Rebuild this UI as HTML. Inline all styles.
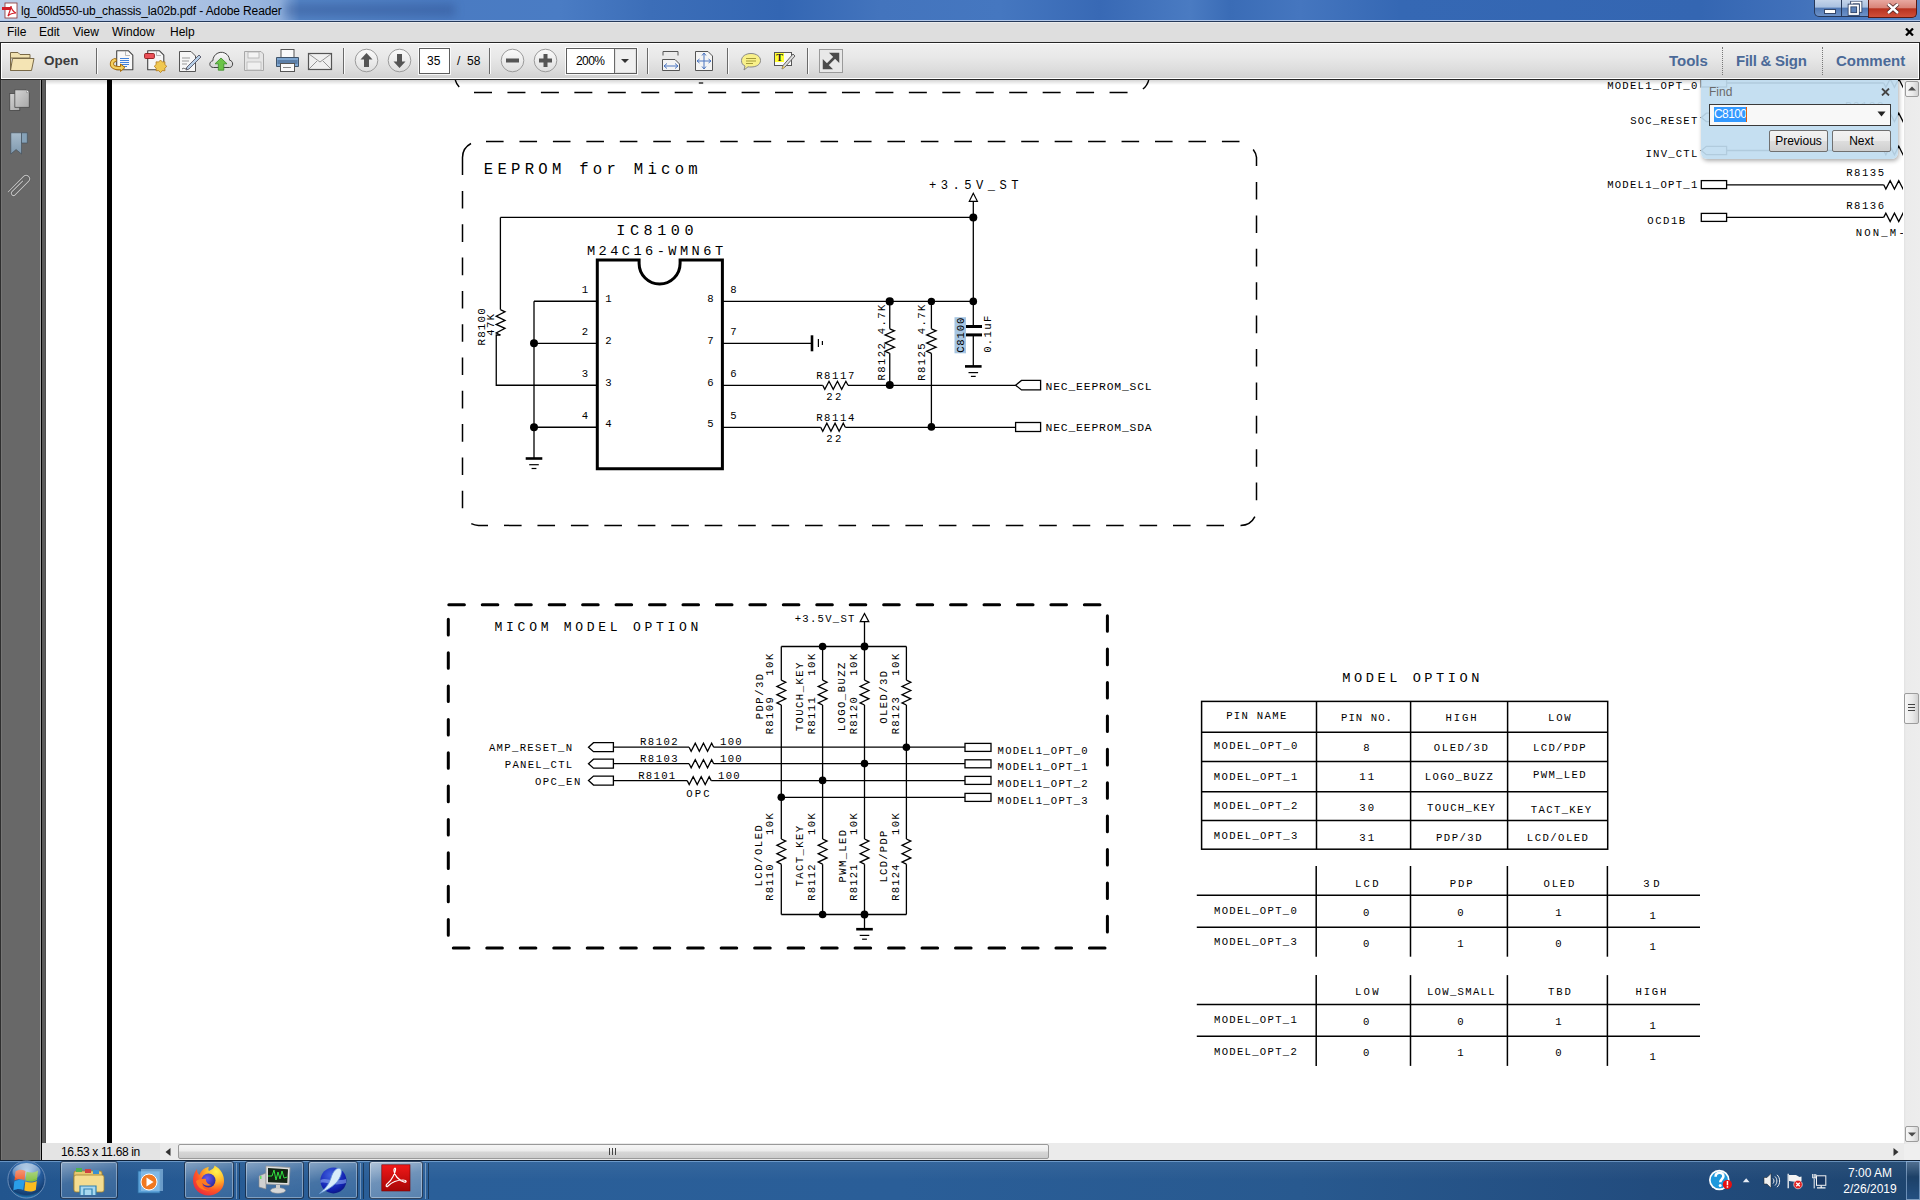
<!DOCTYPE html>
<html><head><meta charset="utf-8"><style>
html,body{margin:0;padding:0;width:1920px;height:1200px;overflow:hidden;background:#fff;}
body{position:relative;font-family:"Liberation Sans",sans-serif;}
.abs{position:absolute;}
#sch text{font-family:"Liberation Mono",monospace;fill:#000;stroke:none;}
</style></head><body>
<div class="abs" style="left:0;top:0;width:1920px;height:20px;background:linear-gradient(90deg,#bccfe8 0px,#b3c8e5 120px,#a4bde2 230px,#8eaedb 280px,#5484c6 300px,#4a7bc2 450px,#4a7cc4 560px,#3c6eb8 650px,#3366b3 780px,#4374bd 880px,#4577c0 1000px,#3869b5 1100px,#4a7bc2 1190px,#3a6cb6 1230px,#4576bf 1300px,#3568b4 1400px,#3466b2 1700px,#4070ba 1790px,#5585c6 1920px);"></div><div class="abs" style="left:285px;top:4px;width:170px;height:12px;background:rgba(40,70,130,0.35);filter:blur(4px);"></div><div class="abs" style="left:0;top:20px;width:1920px;height:1px;background:#b0c6e8;"></div><div class="abs" style="left:0;top:21px;width:1920px;height:1px;background:#263a5a;"></div><svg class="abs" style="left:2px;top:2px" width="16" height="17" viewBox="0 0 16 17"><rect x="3" y="1" width="12" height="15" fill="#fff" stroke="#8a3030" stroke-width="0.8"/><rect x="0" y="5" width="9" height="3" fill="#d2202a"/><path d="M6,14 C8,9 9,5 9,4 C9,6 11,10 14,11 C11,11 8,12 6,14Z" fill="none" stroke="#d2202a" stroke-width="1.2"/></svg><div class="abs" style="left:21px;top:3px;font-size:12px;line-height:16px;color:#000;white-space:nowrap;letter-spacing:-0.12px;">lg_60ld550-ub_chassis_la02b.pdf - Adobe Reader</div><div class="abs" style="left:1814px;top:0;width:28px;height:17px;border:1px solid #26385a;border-top:none;border-radius:0 0 0 5px;background:linear-gradient(180deg,#c4d4ea 0,#a9c0e0 45%,#5078b4 50%,#6d92c8 100%);box-sizing:border-box;"></div><div class="abs" style="left:1841px;top:0;width:28px;height:17px;border:1px solid #26385a;border-top:none;background:linear-gradient(180deg,#c4d4ea 0,#a9c0e0 45%,#5078b4 50%,#6d92c8 100%);box-sizing:border-box;"></div><div class="abs" style="left:1868px;top:0;width:49px;height:18px;border:1px solid #5a1a14;border-top:none;border-radius:0 0 5px 0;background:linear-gradient(180deg,#e8a8a0 0,#d98478 45%,#b8321f 52%,#d0503a 100%);box-sizing:border-box;"></div><div class="abs" style="left:1824px;top:9px;width:10px;height:3px;background:#fff;border:1px solid #33466a;"></div><svg class="abs" style="left:1847px;top:1px" width="16" height="15" viewBox="0 0 16 15"><rect x="5" y="1.5" width="8.5" height="8.5" fill="none" stroke="#33466a" stroke-width="3.6"/><rect x="5" y="1.5" width="8.5" height="8.5" fill="none" stroke="#fff" stroke-width="1.8"/><rect x="2.5" y="4.5" width="8.5" height="8.5" fill="#5a80b8" stroke="#33466a" stroke-width="3.6"/><rect x="2.5" y="4.5" width="8.5" height="8.5" fill="none" stroke="#fff" stroke-width="1.8"/></svg><svg class="abs" style="left:1886px;top:3px" width="14" height="11" viewBox="0 0 14 11"><path d="M2,1 L12,10 M12,1 L2,10" stroke="#4a2020" stroke-width="4"/><path d="M2,1 L12,10 M12,1 L2,10" stroke="#fff" stroke-width="2.4"/></svg><div class="abs" style="left:0;top:22px;width:1920px;height:20px;background:#dedede;"></div><div class="abs" style="left:0;top:22px;width:1920px;height:1px;background:#ececec;"></div><div class="abs" style="left:7px;top:24px;font-size:12px;line-height:16px;color:#000;">File</div><div class="abs" style="left:39px;top:24px;font-size:12px;line-height:16px;color:#000;">Edit</div><div class="abs" style="left:73px;top:24px;font-size:12px;line-height:16px;color:#000;">View</div><div class="abs" style="left:112px;top:24px;font-size:12px;line-height:16px;color:#000;">Window</div><div class="abs" style="left:170px;top:24px;font-size:12px;line-height:16px;color:#000;">Help</div><svg class="abs" style="left:1905px;top:28px" width="9" height="8" viewBox="0 0 9 8"><path d="M1,0.5 L8,7.5 M8,0.5 L1,7.5" stroke="#000" stroke-width="2.2"/></svg><div class="abs" style="left:0;top:80px;width:41px;height:1080px;background:#686868;"></div><div class="abs" style="left:0;top:80px;width:1px;height:1080px;background:#2e2e2e;"></div><div class="abs" style="left:1px;top:80px;width:1px;height:1080px;background:#747474;"></div><div class="abs" style="left:40px;top:80px;width:1px;height:1080px;background:#a5a5a5;"></div><div class="abs" style="left:41px;top:80px;width:1px;height:1080px;background:#000;"></div><div class="abs" style="left:42px;top:80px;width:3px;height:1063px;background:#5a5a5a;"></div><div class="abs" style="left:45px;top:80px;width:1px;height:1063px;background:#4d4d4d;"></div><svg id="sch" class="abs" style="left:0;top:0" width="1920" height="1200" viewBox="0 0 1920 1200" stroke="#000" fill="none"><defs><clipPath id="pc"><rect x="46" y="80" width="1857" height="1063"/></clipPath></defs><g clip-path="url(#pc)"><rect x="46" y="80" width="1858" height="1063" fill="#fff" stroke="none"/><rect x="107" y="80" width="5" height="1063" fill="#000" stroke="none"/><line x1="474.00" y1="92.40" x2="1129.00" y2="92.40" stroke-width="1.50" stroke-dasharray="18.00 15.45" stroke-dashoffset="0.00" stroke-linecap="butt"/><path d="M455.3,80 A16,16 0 0 0 459.2,87" fill="none" stroke-width="1.4"/><path d="M1148.7,80 A16,16 0 0 1 1142.9,89" fill="none" stroke-width="1.4"/><line x1="698.80" y1="83.00" x2="703.20" y2="83.00" stroke-width="1.20"/><line x1="486.00" y1="141.40" x2="1241.00" y2="141.40" stroke-width="1.50" stroke-dasharray="17.60 15.85" stroke-dashoffset="0.00" stroke-linecap="butt"/><line x1="1256.50" y1="182.00" x2="1256.50" y2="501.00" stroke-width="1.50" stroke-dasharray="17.60 15.80" stroke-dashoffset="0.00" stroke-linecap="butt"/><line x1="504.00" y1="525.40" x2="1224.50" y2="525.40" stroke-width="1.50" stroke-dasharray="17.60 15.85" stroke-dashoffset="0.00" stroke-linecap="butt"/><line x1="462.50" y1="191.00" x2="462.50" y2="509.50" stroke-width="1.50" stroke-dasharray="17.60 15.70" stroke-dashoffset="0.00" stroke-linecap="butt"/><path d="M471,143.5 A16,16 0 0 0 462.5,157.4 L462.5,175" fill="none" stroke-width="1.5"/><path d="M1253.2,149.5 A16,16 0 0 1 1256.5,157.4 L1256.5,166" fill="none" stroke-width="1.5"/><path d="M1254.9,516.6 A16,16 0 0 1 1240.5,525.4" fill="none" stroke-width="1.5"/><path d="M471.3,523.7 A16,16 0 0 0 478.5,525.4 L488,525.4" fill="none" stroke-width="1.5"/><text x="483.75" y="174.00" font-size="15.63" letter-spacing="4.26">EEPROM for Micom</text><text x="929.03" y="189.30" font-size="12.14" letter-spacing="4.46">+3.5V_ST</text><polygon points="973.3,193.3 969.3,201.3 977.4,201.3" fill="#fff" stroke-width="1.2"/><line x1="973.30" y1="201.30" x2="973.30" y2="326.50" stroke-width="1.30"/><line x1="973.30" y1="334.90" x2="973.30" y2="366.40" stroke-width="1.30"/><circle cx="973.30" cy="217.40" r="4.00" fill="#000" stroke="none"/><line x1="500.40" y1="217.40" x2="973.30" y2="217.40" stroke-width="1.30"/><line x1="500.40" y1="217.40" x2="500.40" y2="309.60" stroke-width="1.30"/><polyline fill="none" stroke-width="1.30" points="500.40,309.60 505.00,311.80 496.20,316.20 505.00,320.40 496.20,324.40 505.00,328.40 496.20,333.00 500.40,335.00"/><polyline fill="none" stroke-width="1.30" points="500.40,335.00 496.25,335.00 496.25,385.25 596.00,385.25"/><text x="0" y="0" transform="translate(485.00 345.47) rotate(-90)" font-size="10.93" letter-spacing="1.10">R8100</text><text x="0" y="0" transform="translate(494.00 335.83) rotate(-90)" font-size="10.32" letter-spacing="1.58">47K</text><line x1="534.00" y1="301.25" x2="596.00" y2="301.25" stroke-width="1.30"/><line x1="534.00" y1="301.25" x2="534.00" y2="458.50" stroke-width="1.30"/><circle cx="534.00" cy="343.30" r="4.00" fill="#000" stroke="none"/><circle cx="534.00" cy="427.25" r="4.00" fill="#000" stroke="none"/><line x1="534.00" y1="343.30" x2="596.00" y2="343.30" stroke-width="1.30"/><line x1="534.00" y1="427.25" x2="596.00" y2="427.25" stroke-width="1.30"/><line x1="525.70" y1="458.50" x2="542.30" y2="458.50" stroke-width="2.60"/><line x1="529.20" y1="464.70" x2="538.80" y2="464.70" stroke-width="1.20"/><line x1="531.60" y1="468.50" x2="536.40" y2="468.50" stroke-width="1.20"/><path d="M597.3,259.9 L639.1,259.9 L639.1,263.5 A20.5,20.5 0 0 0 680.1,263.5 L680.1,259.9 L722.4,259.9 L722.4,468.75 L597.3,468.75 Z" fill="none" stroke-width="3" stroke-linejoin="miter"/><text x="616.29" y="235.00" font-size="15.17" letter-spacing="4.54">IC8100</text><text x="586.91" y="255.00" font-size="13.66" letter-spacing="3.44">M24C16-WMN6T</text><text x="581.65" y="293.00" font-size="10.62" letter-spacing="0.00">1</text><text x="605.15" y="301.70" font-size="10.62" letter-spacing="0.00">1</text><text x="707.15" y="301.70" font-size="10.62" letter-spacing="0.00">8</text><text x="730.15" y="293.00" font-size="10.62" letter-spacing="0.00">8</text><text x="581.65" y="334.90" font-size="10.62" letter-spacing="0.00">2</text><text x="605.15" y="343.60" font-size="10.62" letter-spacing="0.00">2</text><text x="707.15" y="343.60" font-size="10.62" letter-spacing="0.00">7</text><text x="730.15" y="334.90" font-size="10.62" letter-spacing="0.00">7</text><text x="581.65" y="376.80" font-size="10.62" letter-spacing="0.00">3</text><text x="605.15" y="385.50" font-size="10.62" letter-spacing="0.00">3</text><text x="707.15" y="385.50" font-size="10.62" letter-spacing="0.00">6</text><text x="730.15" y="376.80" font-size="10.62" letter-spacing="0.00">6</text><text x="581.65" y="418.70" font-size="10.62" letter-spacing="0.00">4</text><text x="605.15" y="427.40" font-size="10.62" letter-spacing="0.00">4</text><text x="707.15" y="427.40" font-size="10.62" letter-spacing="0.00">5</text><text x="730.15" y="418.70" font-size="10.62" letter-spacing="0.00">5</text><line x1="722.40" y1="301.30" x2="973.30" y2="301.30" stroke-width="1.30"/><line x1="722.40" y1="343.30" x2="812.00" y2="343.30" stroke-width="1.30"/><line x1="812.00" y1="335.30" x2="812.00" y2="351.30" stroke-width="2.60"/><line x1="818.40" y1="339.00" x2="818.40" y2="347.00" stroke-width="1.20"/><line x1="822.40" y1="341.00" x2="822.40" y2="345.00" stroke-width="1.20"/><line x1="722.40" y1="385.30" x2="822.70" y2="385.30" stroke-width="1.30"/><polyline fill="none" stroke-width="1.30" points="822.70,385.30 824.81,389.30 829.03,381.30 833.24,389.30 837.46,381.30 841.67,389.30 845.89,381.30 848.00,385.30"/><line x1="848.00" y1="385.30" x2="1015.60" y2="385.30" stroke-width="1.30"/><text x="816.15" y="379.00" font-size="10.62" letter-spacing="1.60">R8117</text><text x="826.15" y="399.60" font-size="10.62" letter-spacing="2.53">22</text><line x1="722.40" y1="427.30" x2="820.70" y2="427.30" stroke-width="1.30"/><polyline fill="none" stroke-width="1.30" points="820.70,427.30 822.75,431.30 826.85,423.30 830.95,431.30 835.05,423.30 839.15,431.30 843.25,423.30 845.30,427.30"/><line x1="845.30" y1="427.30" x2="1015.60" y2="427.30" stroke-width="1.30"/><text x="816.15" y="421.00" font-size="10.62" letter-spacing="1.60">R8114</text><text x="826.15" y="441.70" font-size="10.62" letter-spacing="2.53">22</text><circle cx="889.75" cy="301.40" r="4.10" fill="#000" stroke="none"/><line x1="889.75" y1="301.40" x2="889.75" y2="328.80" stroke-width="1.30"/><polyline fill="none" stroke-width="1.30" points="889.75,328.80 894.45,330.84 885.05,334.93 894.45,339.01 885.05,343.09 894.45,347.18 885.05,351.26 889.75,353.30"/><line x1="889.75" y1="353.30" x2="889.75" y2="385.10" stroke-width="1.30"/><circle cx="889.75" cy="385.10" r="4.00" fill="#000" stroke="none"/><circle cx="931.40" cy="301.40" r="3.70" fill="#000" stroke="none"/><line x1="931.40" y1="301.40" x2="931.40" y2="328.80" stroke-width="1.30"/><polyline fill="none" stroke-width="1.30" points="931.40,328.80 936.10,330.84 926.70,334.93 936.10,339.01 926.70,343.09 936.10,347.18 926.70,351.26 931.40,353.30"/><line x1="931.40" y1="353.30" x2="931.40" y2="426.90" stroke-width="1.30"/><circle cx="931.40" cy="426.90" r="3.80" fill="#000" stroke="none"/><circle cx="973.30" cy="301.40" r="3.80" fill="#000" stroke="none"/><line x1="965.60" y1="326.50" x2="982.00" y2="326.50" stroke-width="3.00"/><line x1="965.60" y1="334.90" x2="982.00" y2="334.90" stroke-width="3.00"/><line x1="965.00" y1="366.40" x2="981.60" y2="366.40" stroke-width="2.60"/><line x1="968.50" y1="372.60" x2="978.10" y2="372.60" stroke-width="1.20"/><line x1="970.90" y1="376.40" x2="975.70" y2="376.40" stroke-width="1.20"/><rect x="954.5" y="317.2" width="11.5" height="36.1" fill="#a6c5e2" stroke="none"/><text x="0" y="0" transform="translate(964.00 352.85) rotate(-90)" font-size="10.62" letter-spacing="0.85">C8100</text><text x="0" y="0" transform="translate(990.70 352.85) rotate(-90)" font-size="10.62" letter-spacing="1.35">0.1uF</text><text x="0" y="0" transform="translate(884.50 380.45) rotate(-90)" font-size="10.62" letter-spacing="1.35">R8122 4.7K</text><text x="0" y="0" transform="translate(925.30 380.85) rotate(-90)" font-size="10.62" letter-spacing="1.39">R8125 4.7K</text><polygon points="1015.6,385.2 1021.5,380.4 1040.6,380.4 1040.6,389.9 1021.5,389.9" fill="#fff" stroke-width="1.3"/><rect x="1015.6" y="422.5" width="25" height="9" fill="#fff" stroke-width="1.3"/><text x="1045.59" y="390.40" font-size="11.38" letter-spacing="0.81">NEC_EEPROM_SCL</text><text x="1045.59" y="431.00" font-size="11.38" letter-spacing="0.81">NEC_EEPROM_SDA</text><line x1="448.80" y1="604.70" x2="1107.00" y2="604.70" stroke-width="3.00" stroke-dasharray="15.60 17.85" stroke-dashoffset="0.00" stroke-linecap="round"/><line x1="448.30" y1="619.30" x2="448.30" y2="948.00" stroke-width="3.00" stroke-dasharray="15.60 17.76" stroke-dashoffset="0.00" stroke-linecap="round"/><line x1="453.30" y1="948.00" x2="1107.40" y2="948.00" stroke-width="3.00" stroke-dasharray="15.60 17.88" stroke-dashoffset="0.00" stroke-linecap="round"/><line x1="1107.40" y1="615.70" x2="1107.40" y2="948.00" stroke-width="3.00" stroke-dasharray="15.60 17.80" stroke-dashoffset="0.00" stroke-linecap="round"/><text x="494.56" y="630.80" font-size="13.05" letter-spacing="3.70">MICOM MODEL OPTION</text><text x="488.95" y="751.00" font-size="10.62" letter-spacing="1.32">AMP_RESET_N</text><text x="504.85" y="767.80" font-size="10.62" letter-spacing="1.25">PANEL_CTL</text><text x="534.95" y="784.90" font-size="10.62" letter-spacing="1.43">OPC_EN</text><polygon points="588.5,747.20 593.5,742.70 613.4,742.70 613.4,751.70 593.5,751.70" fill="#fff" stroke-width="1.3"/><polygon points="588.5,763.70 593.5,759.20 613.4,759.20 613.4,768.20 593.5,768.20" fill="#fff" stroke-width="1.3"/><polygon points="588.5,780.60 593.5,776.10 613.4,776.10 613.4,785.10 593.5,785.10" fill="#fff" stroke-width="1.3"/><line x1="613.40" y1="747.20" x2="689.10" y2="747.20" stroke-width="1.30"/><polyline fill="none" stroke-width="1.30" points="689.10,747.20 691.15,751.20 695.25,743.20 699.35,751.20 703.45,743.20 707.55,751.20 711.65,743.20 713.70,747.20"/><line x1="713.70" y1="747.20" x2="965.00" y2="747.20" stroke-width="1.30"/><line x1="613.40" y1="763.70" x2="689.10" y2="763.70" stroke-width="1.30"/><polyline fill="none" stroke-width="1.30" points="689.10,763.70 691.15,767.70 695.25,759.70 699.35,767.70 703.45,759.70 707.55,767.70 711.65,759.70 713.70,763.70"/><line x1="713.70" y1="763.70" x2="965.00" y2="763.70" stroke-width="1.30"/><line x1="613.40" y1="780.60" x2="687.20" y2="780.60" stroke-width="1.30"/><polyline fill="none" stroke-width="1.30" points="687.20,780.60 689.20,784.60 693.20,776.60 697.20,784.60 701.20,776.60 705.20,784.60 709.20,776.60 711.20,780.60"/><line x1="711.20" y1="780.60" x2="965.00" y2="780.60" stroke-width="1.30"/><line x1="781.30" y1="797.30" x2="965.00" y2="797.30" stroke-width="1.30"/><text x="639.95" y="744.90" font-size="10.62" letter-spacing="1.48">R8102</text><text x="719.95" y="744.90" font-size="10.62" letter-spacing="1.33">100</text><text x="639.95" y="761.50" font-size="10.62" letter-spacing="1.48">R8103</text><text x="719.95" y="761.50" font-size="10.62" letter-spacing="1.33">100</text><text x="638.15" y="778.80" font-size="10.62" letter-spacing="1.30">R8101</text><text x="717.95" y="778.80" font-size="10.62" letter-spacing="1.33">100</text><text x="686.35" y="797.00" font-size="10.62" letter-spacing="2.13">OPC</text><text x="794.65" y="622.20" font-size="10.62" letter-spacing="1.26">+3.5V_ST</text><polygon points="864.5,613.5 860.2,621.7 868.8,621.7" fill="#fff" stroke-width="1.2"/><line x1="864.50" y1="621.70" x2="864.50" y2="646.50" stroke-width="1.30"/><line x1="781.30" y1="646.50" x2="906.40" y2="646.50" stroke-width="1.30"/><line x1="781.30" y1="914.50" x2="906.40" y2="914.50" stroke-width="1.30"/><line x1="781.30" y1="646.50" x2="781.30" y2="680.20" stroke-width="1.30"/><polyline fill="none" stroke-width="1.30" points="781.30,680.20 785.70,682.27 776.90,686.40 785.70,690.53 776.90,694.67 785.70,698.80 776.90,702.93 781.30,705.00"/><line x1="781.30" y1="705.00" x2="781.30" y2="839.00" stroke-width="1.30"/><polyline fill="none" stroke-width="1.30" points="781.30,839.00 785.70,841.10 776.90,845.30 785.70,849.50 776.90,853.70 785.70,857.90 776.90,862.10 781.30,864.20"/><line x1="781.30" y1="864.20" x2="781.30" y2="914.50" stroke-width="1.30"/><line x1="822.60" y1="646.50" x2="822.60" y2="680.20" stroke-width="1.30"/><polyline fill="none" stroke-width="1.30" points="822.60,680.20 827.00,682.27 818.20,686.40 827.00,690.53 818.20,694.67 827.00,698.80 818.20,702.93 822.60,705.00"/><line x1="822.60" y1="705.00" x2="822.60" y2="839.00" stroke-width="1.30"/><polyline fill="none" stroke-width="1.30" points="822.60,839.00 827.00,841.10 818.20,845.30 827.00,849.50 818.20,853.70 827.00,857.90 818.20,862.10 822.60,864.20"/><line x1="822.60" y1="864.20" x2="822.60" y2="914.50" stroke-width="1.30"/><line x1="864.50" y1="646.50" x2="864.50" y2="680.20" stroke-width="1.30"/><polyline fill="none" stroke-width="1.30" points="864.50,680.20 868.90,682.27 860.10,686.40 868.90,690.53 860.10,694.67 868.90,698.80 860.10,702.93 864.50,705.00"/><line x1="864.50" y1="705.00" x2="864.50" y2="839.00" stroke-width="1.30"/><polyline fill="none" stroke-width="1.30" points="864.50,839.00 868.90,841.10 860.10,845.30 868.90,849.50 860.10,853.70 868.90,857.90 860.10,862.10 864.50,864.20"/><line x1="864.50" y1="864.20" x2="864.50" y2="914.50" stroke-width="1.30"/><line x1="906.40" y1="646.50" x2="906.40" y2="680.20" stroke-width="1.30"/><polyline fill="none" stroke-width="1.30" points="906.40,680.20 910.80,682.27 902.00,686.40 910.80,690.53 902.00,694.67 910.80,698.80 902.00,702.93 906.40,705.00"/><line x1="906.40" y1="705.00" x2="906.40" y2="839.00" stroke-width="1.30"/><polyline fill="none" stroke-width="1.30" points="906.40,839.00 910.80,841.10 902.00,845.30 910.80,849.50 902.00,853.70 910.80,857.90 902.00,862.10 906.40,864.20"/><line x1="906.40" y1="864.20" x2="906.40" y2="914.50" stroke-width="1.30"/><circle cx="822.60" cy="646.50" r="3.80" fill="#000" stroke="none"/><circle cx="864.50" cy="646.50" r="3.90" fill="#000" stroke="none"/><circle cx="906.40" cy="747.20" r="3.80" fill="#000" stroke="none"/><circle cx="864.50" cy="763.60" r="3.80" fill="#000" stroke="none"/><circle cx="822.60" cy="780.40" r="3.80" fill="#000" stroke="none"/><circle cx="781.30" cy="797.30" r="3.80" fill="#000" stroke="none"/><circle cx="822.60" cy="914.50" r="3.80" fill="#000" stroke="none"/><circle cx="864.50" cy="914.50" r="3.90" fill="#000" stroke="none"/><line x1="864.50" y1="914.50" x2="864.50" y2="929.20" stroke-width="1.30"/><line x1="856.20" y1="929.20" x2="872.80" y2="929.20" stroke-width="2.60"/><line x1="859.70" y1="935.40" x2="869.30" y2="935.40" stroke-width="1.20"/><line x1="862.10" y1="939.20" x2="866.90" y2="939.20" stroke-width="1.20"/><text x="0" y="0" transform="translate(762.50 719.35) rotate(-90)" font-size="10.62" letter-spacing="1.47">PDP/3D</text><text x="0" y="0" transform="translate(772.50 734.35) rotate(-90)" font-size="10.62" letter-spacing="1.35">R8109</text><text x="0" y="0" transform="translate(772.50 675.85) rotate(-90)" font-size="10.62" letter-spacing="1.58">10K</text><text x="0" y="0" transform="translate(803.00 731.35) rotate(-90)" font-size="10.62" letter-spacing="1.43">TOUCH_KEY</text><text x="0" y="0" transform="translate(814.50 734.35) rotate(-90)" font-size="10.62" letter-spacing="1.35">R8111</text><text x="0" y="0" transform="translate(814.50 675.85) rotate(-90)" font-size="10.62" letter-spacing="1.58">10K</text><text x="0" y="0" transform="translate(845.20 731.35) rotate(-90)" font-size="10.62" letter-spacing="1.43">LOGO_BUZZ</text><text x="0" y="0" transform="translate(856.50 734.35) rotate(-90)" font-size="10.62" letter-spacing="1.35">R8120</text><text x="0" y="0" transform="translate(856.50 675.85) rotate(-90)" font-size="10.62" letter-spacing="1.58">10K</text><text x="0" y="0" transform="translate(887.20 723.85) rotate(-90)" font-size="10.62" letter-spacing="1.41">OLED/3D</text><text x="0" y="0" transform="translate(898.50 734.35) rotate(-90)" font-size="10.62" letter-spacing="1.35">R8123</text><text x="0" y="0" transform="translate(898.50 675.85) rotate(-90)" font-size="10.62" letter-spacing="1.58">10K</text><text x="0" y="0" transform="translate(762.20 886.55) rotate(-90)" font-size="10.62" letter-spacing="1.50">LCD/OLED</text><text x="0" y="0" transform="translate(773.30 900.85) rotate(-90)" font-size="10.62" letter-spacing="1.15">R8110</text><text x="0" y="0" transform="translate(773.30 835.05) rotate(-90)" font-size="10.62" letter-spacing="1.38">10K</text><text x="0" y="0" transform="translate(803.40 886.55) rotate(-90)" font-size="10.62" letter-spacing="1.38">TACT_KEY</text><text x="0" y="0" transform="translate(814.60 900.85) rotate(-90)" font-size="10.62" letter-spacing="1.15">R8112</text><text x="0" y="0" transform="translate(814.60 835.05) rotate(-90)" font-size="10.62" letter-spacing="1.38">10K</text><text x="0" y="0" transform="translate(845.50 882.55) rotate(-90)" font-size="10.62" letter-spacing="1.36">PWM_LED</text><text x="0" y="0" transform="translate(856.60 900.85) rotate(-90)" font-size="10.62" letter-spacing="1.15">R8121</text><text x="0" y="0" transform="translate(856.60 835.05) rotate(-90)" font-size="10.62" letter-spacing="1.38">10K</text><text x="0" y="0" transform="translate(887.30 882.55) rotate(-90)" font-size="10.62" letter-spacing="1.23">LCD/PDP</text><text x="0" y="0" transform="translate(898.50 900.85) rotate(-90)" font-size="10.62" letter-spacing="1.15">R8124</text><text x="0" y="0" transform="translate(898.50 835.05) rotate(-90)" font-size="10.62" letter-spacing="1.38">10K</text><rect x="965" y="743.40" width="26" height="8" fill="#fff" stroke-width="1.3"/><text x="997.55" y="754.00" font-size="10.62" letter-spacing="1.25">MODEL1_OPT_0</text><rect x="965" y="759.80" width="26" height="8" fill="#fff" stroke-width="1.3"/><text x="997.55" y="770.00" font-size="10.62" letter-spacing="1.25">MODEL1_OPT_1</text><rect x="965" y="776.40" width="26" height="8" fill="#fff" stroke-width="1.3"/><text x="997.55" y="787.00" font-size="10.62" letter-spacing="1.25">MODEL1_OPT_2</text><rect x="965" y="793.40" width="26" height="8" fill="#fff" stroke-width="1.3"/><text x="997.55" y="804.00" font-size="10.62" letter-spacing="1.25">MODEL1_OPT_3</text><text x="1342.31" y="682.40" font-size="13.66" letter-spacing="3.53">MODEL OPTION</text><rect x="1201.6" y="701.4" width="406.1" height="147.8" fill="none" stroke-width="1.5"/><line x1="1316.50" y1="701.40" x2="1316.50" y2="849.20" stroke-width="1.50"/><line x1="1410.60" y1="701.40" x2="1410.60" y2="849.20" stroke-width="1.50"/><line x1="1507.60" y1="701.40" x2="1507.60" y2="849.20" stroke-width="1.50"/><line x1="1201.60" y1="732.30" x2="1607.70" y2="732.30" stroke-width="1.50"/><line x1="1201.60" y1="761.50" x2="1607.70" y2="761.50" stroke-width="1.50"/><line x1="1201.60" y1="791.70" x2="1607.70" y2="791.70" stroke-width="1.50"/><line x1="1201.60" y1="820.60" x2="1607.70" y2="820.60" stroke-width="1.50"/><text x="1226.15" y="719.40" font-size="10.62" letter-spacing="1.31">PIN NAME</text><text x="1340.95" y="721.10" font-size="10.62" letter-spacing="1.08">PIN NO.</text><text x="1445.55" y="721.10" font-size="10.62" letter-spacing="1.86">HIGH</text><text x="1547.95" y="721.10" font-size="10.62" letter-spacing="1.83">LOW</text><text x="1213.75" y="749.10" font-size="10.62" letter-spacing="1.36">MODEL_OPT_0</text><text x="1363.35" y="751.20" font-size="10.62" letter-spacing="0.00">8</text><text x="1433.75" y="751.20" font-size="10.62" letter-spacing="1.58">OLED/3D</text><text x="1532.95" y="751.20" font-size="10.62" letter-spacing="1.36">LCD/PDP</text><text x="1213.75" y="779.80" font-size="10.62" letter-spacing="1.36">MODEL_OPT_1</text><text x="1359.35" y="780.30" font-size="10.62" letter-spacing="1.93">11</text><text x="1424.75" y="780.30" font-size="10.62" letter-spacing="1.34">LOGO_BUZZ</text><text x="1532.95" y="778.30" font-size="10.62" letter-spacing="1.36">PWM_LED</text><text x="1213.75" y="809.40" font-size="10.62" letter-spacing="1.36">MODEL_OPT_2</text><text x="1359.35" y="811.20" font-size="10.62" letter-spacing="1.93">30</text><text x="1427.05" y="811.20" font-size="10.62" letter-spacing="1.33">TOUCH_KEY</text><text x="1530.65" y="813.00" font-size="10.62" letter-spacing="1.38">TACT_KEY</text><text x="1213.75" y="838.50" font-size="10.62" letter-spacing="1.36">MODEL_OPT_3</text><text x="1359.35" y="841.00" font-size="10.62" letter-spacing="1.93">31</text><text x="1435.95" y="841.00" font-size="10.62" letter-spacing="1.49">PDP/3D</text><text x="1526.85" y="841.00" font-size="10.62" letter-spacing="1.44">LCD/OLED</text><line x1="1196.80" y1="895.20" x2="1700.00" y2="895.20" stroke-width="1.50"/><line x1="1196.80" y1="927.20" x2="1700.00" y2="927.20" stroke-width="1.50"/><line x1="1316.20" y1="866.00" x2="1316.20" y2="956.70" stroke-width="1.50"/><line x1="1410.50" y1="866.00" x2="1410.50" y2="956.70" stroke-width="1.50"/><line x1="1507.40" y1="866.00" x2="1507.40" y2="956.70" stroke-width="1.50"/><line x1="1607.40" y1="866.00" x2="1607.40" y2="956.70" stroke-width="1.50"/><text x="1354.95" y="887.10" font-size="10.62" letter-spacing="2.28">LCD</text><text x="1449.75" y="887.10" font-size="10.62" letter-spacing="1.88">PDP</text><text x="1543.45" y="887.10" font-size="10.62" letter-spacing="1.83">OLED</text><text x="1643.35" y="887.10" font-size="10.62" letter-spacing="3.43">3D</text><text x="1214.05" y="913.60" font-size="10.62" letter-spacing="1.27">MODEL_OPT_0</text><text x="1362.95" y="915.50" font-size="10.62" letter-spacing="0.00">0</text><text x="1457.25" y="915.50" font-size="10.62" letter-spacing="0.00">0</text><text x="1555.25" y="915.50" font-size="10.62" letter-spacing="0.00">1</text><text x="1649.55" y="919.00" font-size="10.62" letter-spacing="0.00">1</text><text x="1214.05" y="944.80" font-size="10.62" letter-spacing="1.27">MODEL_OPT_3</text><text x="1362.95" y="946.70" font-size="10.62" letter-spacing="0.00">0</text><text x="1457.25" y="946.70" font-size="10.62" letter-spacing="0.00">1</text><text x="1555.25" y="946.70" font-size="10.62" letter-spacing="0.00">0</text><text x="1649.55" y="950.20" font-size="10.62" letter-spacing="0.00">1</text><line x1="1196.80" y1="1004.40" x2="1700.00" y2="1004.40" stroke-width="1.50"/><line x1="1196.80" y1="1036.30" x2="1700.00" y2="1036.30" stroke-width="1.50"/><line x1="1316.20" y1="975.10" x2="1316.20" y2="1065.90" stroke-width="1.50"/><line x1="1410.50" y1="975.10" x2="1410.50" y2="1065.90" stroke-width="1.50"/><line x1="1507.40" y1="975.10" x2="1507.40" y2="1065.90" stroke-width="1.50"/><line x1="1607.40" y1="975.10" x2="1607.40" y2="1065.90" stroke-width="1.50"/><text x="1354.95" y="995.40" font-size="10.62" letter-spacing="2.28">LOW</text><text x="1426.95" y="995.40" font-size="10.62" letter-spacing="1.29">LOW_SMALL</text><text x="1548.05" y="995.40" font-size="10.62" letter-spacing="1.88">TBD</text><text x="1635.55" y="995.40" font-size="10.62" letter-spacing="1.76">HIGH</text><text x="1214.05" y="1023.30" font-size="10.62" letter-spacing="1.27">MODEL_OPT_1</text><text x="1362.95" y="1025.20" font-size="10.62" letter-spacing="0.00">0</text><text x="1457.25" y="1025.20" font-size="10.62" letter-spacing="0.00">0</text><text x="1555.25" y="1025.20" font-size="10.62" letter-spacing="0.00">1</text><text x="1649.55" y="1028.70" font-size="10.62" letter-spacing="0.00">1</text><text x="1214.05" y="1054.50" font-size="10.62" letter-spacing="1.27">MODEL_OPT_2</text><text x="1362.95" y="1056.40" font-size="10.62" letter-spacing="0.00">0</text><text x="1457.25" y="1056.40" font-size="10.62" letter-spacing="0.00">1</text><text x="1555.25" y="1056.40" font-size="10.62" letter-spacing="0.00">0</text><text x="1649.55" y="1059.90" font-size="10.62" letter-spacing="0.00">1</text><text x="1607.15" y="88.80" font-size="10.62" letter-spacing="1.25">MODEL1_OPT_0</text><rect x="1701.3" y="79" width="25.3" height="8" fill="#fff" stroke-width="1.3"/><line x1="1726.60" y1="83.00" x2="1883.70" y2="83.00" stroke-width="1.30"/><polyline fill="none" stroke-width="1.30" points="1883.70,83.00 1885.85,87.20 1890.15,78.80 1894.45,87.20 1898.75,78.80 1903.05,87.20 1907.35,78.80 1909.50,83.00"/><text x="1630.15" y="123.70" font-size="10.62" letter-spacing="1.23">SOC_RESET</text><polygon points="1701.3,117.4 1706.3,113.2 1726.6,113.2 1726.6,121.6 1706.3,121.6" fill="#fff" stroke-width="1.3"/><line x1="1726.60" y1="117.40" x2="1883.70" y2="117.40" stroke-width="1.30"/><polyline fill="none" stroke-width="1.30" points="1883.70,117.40 1885.85,121.60 1890.15,113.20 1894.45,121.60 1898.75,113.20 1903.05,121.60 1907.35,113.20 1909.50,117.40"/><text x="1845.15" y="109.00" font-size="10.62" letter-spacing="1.60">R8133</text><text x="1645.55" y="156.80" font-size="10.62" letter-spacing="1.19">INV_CTL</text><polygon points="1701.3,150.5 1706.3,146.3 1726.6,146.3 1726.6,154.7 1706.3,154.7" fill="#fff" stroke-width="1.3"/><line x1="1726.60" y1="150.50" x2="1883.70" y2="150.50" stroke-width="1.30"/><polyline fill="none" stroke-width="1.30" points="1883.70,150.50 1885.85,154.70 1890.15,146.30 1894.45,154.70 1898.75,146.30 1903.05,154.70 1907.35,146.30 1909.50,150.50"/><text x="1607.15" y="188.30" font-size="10.62" letter-spacing="1.25">MODEL1_OPT_1</text><rect x="1701.3" y="180.6" width="25.3" height="8" fill="#fff" stroke-width="1.3"/><line x1="1726.60" y1="184.80" x2="1883.70" y2="184.80" stroke-width="1.30"/><polyline fill="none" stroke-width="1.30" points="1883.70,184.80 1885.85,189.00 1890.15,180.60 1894.45,189.00 1898.75,180.60 1903.05,189.00 1907.35,180.60 1909.50,184.80"/><text x="1846.15" y="176.00" font-size="10.62" letter-spacing="1.53">R8135</text><text x="1647.35" y="224.10" font-size="10.62" letter-spacing="1.50">OCD1B</text><rect x="1701.3" y="213.4" width="25.3" height="8" fill="#fff" stroke-width="1.3"/><line x1="1726.60" y1="217.40" x2="1883.70" y2="217.40" stroke-width="1.30"/><polyline fill="none" stroke-width="1.30" points="1883.70,217.40 1885.85,213.20 1890.15,221.60 1894.45,213.20 1898.75,221.60 1903.05,213.20 1907.35,221.60 1909.50,217.40"/><text x="1846.15" y="208.70" font-size="10.62" letter-spacing="1.53">R8136</text><text x="1855.75" y="236.10" font-size="10.62" letter-spacing="2.16">NON_M-RES</text></g></svg><div class="abs" style="left:0;top:42px;width:1920px;height:38px;box-sizing:border-box;border:1px solid #262626;background:linear-gradient(180deg,#f0f0f0 0,#e8e8e8 40%,#dcdcdc 75%,#d0d0d0 100%);box-shadow:inset 0 0 0 1px #fff;"></div><div class="abs" style="left:46px;top:80px;width:1858px;height:5px;background:linear-gradient(180deg,rgba(0,0,0,0.16),rgba(0,0,0,0));"></div><div class="abs" style="left:96px;top:48px;width:1px;height:26px;background:#6a6a6a;box-shadow:1px 0 0 #fafafa;"></div><div class="abs" style="left:343px;top:48px;width:1px;height:26px;background:#6a6a6a;box-shadow:1px 0 0 #fafafa;"></div><div class="abs" style="left:489px;top:48px;width:1px;height:26px;background:#6a6a6a;box-shadow:1px 0 0 #fafafa;"></div><div class="abs" style="left:647px;top:48px;width:1px;height:26px;background:#6a6a6a;box-shadow:1px 0 0 #fafafa;"></div><div class="abs" style="left:727px;top:48px;width:1px;height:26px;background:#6a6a6a;box-shadow:1px 0 0 #fafafa;"></div><div class="abs" style="left:807px;top:48px;width:1px;height:26px;background:#6a6a6a;box-shadow:1px 0 0 #fafafa;"></div><svg class="abs" style="left:9px;top:50px" width="26" height="22" viewBox="0 0 26 22"><path d="M1.5,2.5 L9,2.5 L11,4.5 L21,4.5 L21,8 L1.5,8 Z" fill="#f2e2b0" stroke="#7a6a48" stroke-width="1"/><path d="M1.5,20.5 L3.5,8.5 L25,8.5 L22.5,20.5 Z" fill="#f4e4b4" stroke="#7a6a48" stroke-width="1"/><path d="M1.5,3 L1.5,20.5" stroke="#7a6a48"/></svg><div class="abs" style="left:44px;top:53px;font-size:13.5px;font-weight:bold;line-height:16px;color:#3c3c3c;">Open</div><svg class="abs" style="left:108px;top:46px" width="64" height="30" viewBox="0 0 64 30"><path d="M8.7,4.7 H20.3 L24.8,9.2 V23.8 H8.7 Z" fill="#f8f8f8" stroke="#444" stroke-width="1.1" stroke-linejoin="round"/><path d="M17.5,5 V9.5 H22" fill="none" stroke="#aaa" stroke-width="0.8"/><path d="M12,12.5 H21 M12,14.5 H21 M12,16.5 H21 M12,18.5 H21 M15,20.5 H19" stroke="#2a74d8" stroke-width="0.9"/><path d="M6.8,14.2 C3.5,15 2.8,19.5 6,21.2 C8,22.3 11,22.2 13,22" fill="none" stroke="#a86c10" stroke-width="4.2" stroke-linecap="round"/><path d="M12.5,18 L17,21.5 L12.5,25.5 Z" fill="#f2c84a" stroke="#a86c10" stroke-width="1" stroke-linejoin="round"/><path d="M6.8,14.2 C3.5,15 2.8,19.5 6,21.2 C8,22.3 11,22.2 13.5,22" fill="none" stroke="#f4d060" stroke-width="2.4" stroke-linecap="round"/></svg><svg class="abs" style="left:108px;top:46px" width="64" height="30" viewBox="0 0 64 30"><path d="M39.7,4.7 H51.3 L55.8,9.2 V23.8 H39.7 Z" fill="#f6f6f6" stroke="#444" stroke-width="1.1" stroke-linejoin="round"/><path d="M48.5,5 V9.5 H53" fill="none" stroke="#aaa" stroke-width="0.8"/><rect x="36.6" y="7.5" width="9.8" height="5" rx="1" fill="#ec5058" stroke="#8a1818" stroke-width="0.9"/><polygon points="52.50,14.00 54.30,15.96 56.95,15.85 56.84,18.50 58.80,20.30 56.84,22.10 56.95,24.75 54.30,24.64 52.50,26.60 50.70,24.64 48.05,24.75 48.16,22.10 46.20,20.30 48.16,18.50 48.05,15.85 50.70,15.96" fill="#f0c850" stroke="#b07820" stroke-width="0.8" stroke-linejoin="round"/></svg><svg class="abs" style="left:178px;top:50px" width="24" height="23" viewBox="0 0 24 23"><path d="M1.5,1.5 L13,1.5 L17.5,6 L17.5,21.5 L1.5,21.5 Z" fill="#f6f6f6" stroke="#555" stroke-width="1"/><path d="M4,8 H12 M4,11 H11 M4,14 H9" stroke="#999" stroke-width="1"/><path d="M21,5 L23,7 L11,19 L8,20 L9,17 Z" fill="#b8d0e8" stroke="#556" stroke-width="0.9"/><path d="M4,19 C6,17 7,20 9,18" stroke="#444" fill="none" stroke-width="0.8"/></svg><svg class="abs" style="left:206px;top:49px" width="30" height="24" viewBox="206 49 30 24"><defs><linearGradient id="cld" x1="0" y1="0" x2="0" y2="1"><stop offset="0" stop-color="#fafafa"/><stop offset="1" stop-color="#d4d4d4"/></linearGradient></defs><path d="M213.5,67.5 C209,67.5 208.5,61.5 212.8,60.8 C213,53.5 221.5,49.5 227,54.5 C228.8,56.2 229.5,58.5 229.6,60.2 C233.8,60.8 233.5,67.5 229.5,67.5 Z" fill="url(#cld)" stroke="#444" stroke-width="1"/><path d="M221,58 L227,63.8 L223.8,63.8 L223.8,70.2 L218.3,70.2 L218.3,63.8 L215,63.8 Z" fill="#6cc448" stroke="#3a8a28" stroke-width="0.8" stroke-linejoin="round"/></svg><svg class="abs" style="left:243px;top:50px" width="22" height="22" viewBox="0 0 22 22"><path d="M1.5,1.5 L18,1.5 L20.5,4 L20.5,20.5 L1.5,20.5 Z" fill="#e6e6e6" stroke="#a8a8a8" stroke-width="1"/><rect x="5" y="2" width="11" height="6" fill="#f4f4f4" stroke="#b0b0b0" stroke-width="0.8"/><rect x="4" y="12" width="14" height="8" fill="#f0f0f0" stroke="#b8b8b8" stroke-width="0.8"/></svg><svg class="abs" style="left:275px;top:48px" width="25" height="25" viewBox="0 0 25 25"><rect x="6" y="1.5" width="13" height="8" fill="#fafafa" stroke="#555" stroke-width="1"/><path d="M1.5,9.5 H23.5 V18.5 H1.5 Z" fill="#7ea6d0" stroke="#40546a" stroke-width="1"/><rect x="2.5" y="12" width="20" height="4" fill="#5c7fa8"/><rect x="5.5" y="15.5" width="14" height="8" fill="#fafafa" stroke="#555" stroke-width="1"/><path d="M8,19.5 H16" stroke="#888"/></svg><svg class="abs" style="left:307px;top:52px" width="26" height="19" viewBox="0 0 26 19"><rect x="1.5" y="1.5" width="23" height="16" fill="#f0f0f0" stroke="#555" stroke-width="1.2"/><path d="M2,2 L13,10 L24,2 M2,17 L10,9 M24,17 L16,9" stroke="#8a8a8a" fill="none" stroke-width="0.9"/></svg><svg class="abs" style="left:354px;top:48px" width="25" height="25" viewBox="0 0 25 25"><defs><linearGradient id="cg354" x1="0" y1="0" x2="0" y2="1"><stop offset="0" stop-color="#fbfbfb"/><stop offset="1" stop-color="#dedede"/></linearGradient></defs><circle cx="12.5" cy="12.5" r="11.3" fill="url(#cg354)" stroke="#9a9a9a" stroke-width="1"/><path d="M12.5,5 L18.5,11.5 L15,11.5 L15,19 L10,19 L10,11.5 L6.5,11.5 Z" fill="#555"/></svg><svg class="abs" style="left:387px;top:48px" width="25" height="25" viewBox="0 0 25 25"><defs><linearGradient id="cg387" x1="0" y1="0" x2="0" y2="1"><stop offset="0" stop-color="#fbfbfb"/><stop offset="1" stop-color="#dedede"/></linearGradient></defs><circle cx="12.5" cy="12.5" r="11.3" fill="url(#cg387)" stroke="#9a9a9a" stroke-width="1"/><path d="M12.5,20 L18.5,13.5 L15,13.5 L15,6 L10,6 L10,13.5 L6.5,13.5 Z" fill="#555"/></svg><svg class="abs" style="left:500px;top:48px" width="25" height="25" viewBox="0 0 25 25"><defs><linearGradient id="cg500" x1="0" y1="0" x2="0" y2="1"><stop offset="0" stop-color="#fbfbfb"/><stop offset="1" stop-color="#dedede"/></linearGradient></defs><circle cx="12.5" cy="12.5" r="11.3" fill="url(#cg500)" stroke="#9a9a9a" stroke-width="1"/><rect x="6" y="10.5" width="13" height="4" fill="#555"/></svg><svg class="abs" style="left:533px;top:48px" width="25" height="25" viewBox="0 0 25 25"><defs><linearGradient id="cg533" x1="0" y1="0" x2="0" y2="1"><stop offset="0" stop-color="#fbfbfb"/><stop offset="1" stop-color="#dedede"/></linearGradient></defs><circle cx="12.5" cy="12.5" r="11.3" fill="url(#cg533)" stroke="#9a9a9a" stroke-width="1"/><rect x="6" y="10.5" width="13" height="4" fill="#555"/><rect x="10.5" y="6" width="4" height="13" fill="#555"/></svg><div class="abs" style="left:419px;top:48px;width:31px;height:26px;box-sizing:border-box;border:1px solid #5e5e5e;background:#fff;box-shadow:0 0 0 1px rgba(255,255,255,0.8);"></div><div class="abs" style="left:427px;top:53px;font-size:12px;line-height:16px;color:#000;">35</div><div class="abs" style="left:457px;top:53px;font-size:12px;line-height:16px;color:#000;white-space:pre;">/  58</div><div class="abs" style="left:566px;top:48px;width:71px;height:26px;box-sizing:border-box;border:1px solid #5e5e5e;background:#fff;box-shadow:0 0 0 1px rgba(255,255,255,0.8);"></div><div class="abs" style="left:614px;top:49px;width:22px;height:24px;box-sizing:border-box;border-left:1px solid #6a6a6a;background:#f0f0f0;box-shadow:inset 0 0 0 1px #e0e0e0;"></div><svg class="abs" style="left:620px;top:58px" width="10" height="6"><path d="M1,1 L9,1 L5,5 Z" fill="#333"/></svg><div class="abs" style="left:576px;top:53px;font-size:12px;line-height:16px;color:#000;letter-spacing:-0.6px;">200%</div><svg class="abs" style="left:661px;top:50px" width="20" height="22" viewBox="0 0 20 22"><path d="M2,1.5 H17 V5.5" fill="none" stroke="#555" stroke-width="1"/><path d="M2,5.5 V1.5" stroke="#555"/><path d="M1.5,9.5 H14 L18.5,14 V20.5 H1.5 Z" fill="#f4f4f4" stroke="#555" stroke-width="1"/><path d="M3,16 H17 M3,16 L6,13.5 M3,16 L6,18.5 M17,16 L14,13.5 M17,16 L14,18.5" stroke="#4a74c0" stroke-width="1" fill="none"/></svg><svg class="abs" style="left:694px;top:50px" width="20" height="22" viewBox="0 0 20 22"><path d="M1.5,1.5 H14 L18.5,6 V20.5 H1.5 Z" fill="#f4f4f4" stroke="#555" stroke-width="1"/><path d="M10,3 V19 M3,11 H17 M10,3 L8,5.5 M10,3 L12,5.5 M10,19 L8,16.5 M10,19 L12,16.5 M3,11 L5.5,9 M3,11 L5.5,13 M17,11 L14.5,9 M17,11 L14.5,13" stroke="#4a74c0" stroke-width="1" fill="none"/></svg><svg class="abs" style="left:740px;top:52px" width="22" height="19" viewBox="0 0 22 19"><path d="M11,1.5 C16.5,1.5 20.5,4.5 20.5,8.5 C20.5,12.5 16.5,15 11,15 C10,15 9,15 8,14.8 L4,18 L5,14 C2.5,13 1.5,11 1.5,8.5 C1.5,4.5 5.5,1.5 11,1.5 Z" fill="#f8f08a" stroke="#888" stroke-width="1"/><path d="M6,6.5 H16 M6,9 H16 M6,11.5 H13" stroke="#9a9030" stroke-width="0.9"/></svg><svg class="abs" style="left:773px;top:50px" width="23" height="22" viewBox="0 0 23 22"><rect x="1.5" y="2.5" width="17" height="13" fill="#fafafa" stroke="#555" stroke-width="1"/><rect x="2" y="3" width="9" height="9" fill="#ffff30"/><text x="3.2" y="11" font-family="Liberation Serif" font-size="10" font-weight="bold" fill="#222">T</text><path d="M20,4 L22,6 L12,17 L9,19 L10,15.5 Z" fill="#dcdcdc" stroke="#555" stroke-width="0.9"/><path d="M9,19 L10,16 L12,17 Z" fill="#f2c850"/></svg><svg class="abs" style="left:818px;top:48px" width="26" height="26" viewBox="0 0 26 26"><rect x="1.5" y="1.5" width="23" height="23" fill="#e8e8e8" stroke="#9a9a9a" stroke-width="1"/><path d="M14,6 L20,6 L20,12 Z M6,14 L6,20 L12,20 Z M18,8 L13,13 M8,18 L13,13" stroke="#4a4a4a" stroke-width="2.5" fill="#4a4a4a"/></svg><div class="abs" style="left:1669px;top:52px;font-size:15px;font-weight:bold;line-height:18px;color:#4b6a98;">Tools</div><div class="abs" style="left:1722px;top:47px;width:0;height:28px;border-left:1px dotted #777;"></div><div class="abs" style="left:1736px;top:52px;font-size:15px;font-weight:bold;line-height:18px;color:#4b6a98;white-space:nowrap;letter-spacing:-0.25px;">Fill &amp; Sign</div><div class="abs" style="left:1822px;top:47px;width:0;height:28px;border-left:1px dotted #777;"></div><div class="abs" style="left:1836px;top:52px;font-size:15px;font-weight:bold;line-height:18px;color:#4b6a98;">Comment</div><svg class="abs" style="left:0px;top:80px" width="40" height="130" viewBox="0 80 40 130"><defs><linearGradient id="pg" x1="0" y1="0" x2="1" y2="1"><stop offset="0" stop-color="#d4d4d4"/><stop offset="1" stop-color="#a8a8a8"/></linearGradient><linearGradient id="bm" x1="0" y1="0" x2="0" y2="1"><stop offset="0" stop-color="#a8bccc"/><stop offset="1" stop-color="#7e98ae"/></linearGradient></defs><rect x="9.8" y="93.5" width="10" height="17" fill="url(#pg)" stroke="#3a3a3a" stroke-width="0.7"/><path d="M14.8,89.8 H26.5 L29.3,92.6 V107.4 H14.8 Z" fill="url(#pg)" stroke="#3a3a3a" stroke-width="0.7"/><path d="M26.5,89.8 V92.6 H29.3" fill="#eee" stroke="#777" stroke-width="0.5"/><path d="M10.8,132.8 H21.5 V154 L16.1,149.5 L10.8,154 Z" fill="url(#bm)" stroke="#3e4c58" stroke-width="0.6"/><path d="M21.5,132.8 H27.3 V143 H21.5 Z" fill="#86a2b8" stroke="#3e4c58" stroke-width="0.6"/><g transform="rotate(45 19 186)"><path d="M15.5,198 V176 A3.5,3.5 0 0 1 22.5,176 V195 A2.2,2.2 0 0 1 18.1,195 V180" fill="none" stroke="#5a5a5a" stroke-width="2.2" stroke-linecap="round"/><path d="M15.5,198 V176 A3.5,3.5 0 0 1 22.5,176 V195 A2.2,2.2 0 0 1 18.1,195 V180" fill="none" stroke="#c4c4c4" stroke-width="1" stroke-linecap="round"/></g></svg><div class="abs" style="left:1701px;top:80px;width:197px;height:79px;background:rgba(192,220,240,0.92);border-radius:0 0 6px 6px;box-shadow:1px 2px 4px rgba(0,0,0,0.32);"></div><div class="abs" style="left:1709px;top:85px;font-size:12px;line-height:14px;color:#6a6a6a;">Find</div><svg class="abs" style="left:1881px;top:88px" width="9" height="8" viewBox="0 0 9 8"><path d="M1,0.5 L8,7.5 M8,0.5 L1,7.5" stroke="#444" stroke-width="1.8"/></svg><div class="abs" style="left:1709px;top:104px;width:182px;height:22px;box-sizing:border-box;border:1px solid #3a3a3a;background:#f8f8f8;"></div><div class="abs" style="left:1714px;top:107px;width:33px;height:15px;background:#3399ff;"></div><div class="abs" style="left:1714px;top:107px;font-size:12px;line-height:15px;color:#fff;letter-spacing:-0.6px;">C8100</div><div class="abs" style="left:1746px;top:107px;width:1px;height:15px;background:#e06010;"></div><svg class="abs" style="left:1877px;top:111px" width="9" height="6"><path d="M0.5,0.5 L8.5,0.5 L4.5,5.5 Z" fill="#222"/></svg><div class="abs" style="left:1769px;top:130px;width:59px;height:22px;box-sizing:border-box;border:1px solid #707070;border-radius:2px;background:linear-gradient(180deg,#f2f2f2 0,#ebebeb 50%,#dddddd 51%,#cfcfcf 100%);font-size:12px;line-height:20px;text-align:center;color:#000;">Previous</div><div class="abs" style="left:1832px;top:130px;width:59px;height:22px;box-sizing:border-box;border:1px solid #707070;border-radius:2px;background:linear-gradient(180deg,#f2f2f2 0,#ebebeb 50%,#dddddd 51%,#cfcfcf 100%);font-size:12px;line-height:20px;text-align:center;color:#000;">Next</div><div class="abs" style="left:1904px;top:80px;width:16px;height:1064px;background:linear-gradient(90deg,#e2e2e2 0,#ebebeb 2px,#ededed 100%);"></div><div class="abs" style="left:1905px;top:81px;width:14px;height:16px;box-sizing:border-box;border:1px solid #9c9c9c;border-radius:2px;background:linear-gradient(90deg,#f6f6f6 0,#eaeaea 55%,#d2d2d2 100%);"></div><svg class="abs" style="left:1908px;top:86px" width="8" height="5"><path d="M0,4.5 L4,0.5 L8,4.5 Z" fill="#4a4a4a"/></svg><div class="abs" style="left:1905px;top:1126px;width:14px;height:16px;box-sizing:border-box;border:1px solid #9c9c9c;border-radius:2px;background:linear-gradient(90deg,#f6f6f6 0,#eaeaea 55%,#d2d2d2 100%);"></div><svg class="abs" style="left:1908px;top:1132px" width="8" height="5"><path d="M0,0.5 L4,4.5 L8,0.5 Z" fill="#4a4a4a"/></svg><div class="abs" style="left:1904px;top:693px;width:15px;height:31px;box-sizing:border-box;border:1px solid #9c9c9c;border-radius:2px;background:linear-gradient(90deg,#f6f6f6 0,#eaeaea 55%,#d2d2d2 100%);"></div><div class="abs" style="left:1908px;top:704px;width:7px;height:1px;background:#444;box-shadow:0 3px 0 #444,0 6px 0 #444;"></div><div class="abs" style="left:42px;top:1143px;width:1862px;height:17px;background:#ebebeb;"></div><div class="abs" style="left:42px;top:1143px;width:118px;height:17px;background:#e4e4e4;"></div><div class="abs" style="left:1904px;top:1144px;width:16px;height:16px;background:#efefef;"></div><div class="abs" style="left:61px;top:1145px;font-size:12px;line-height:14px;color:#000;letter-spacing:-0.35px;">16.53 x 11.68 in</div><svg class="abs" style="left:165px;top:1148px" width="6" height="8"><path d="M5.5,0 L0.5,4 L5.5,8 Z" fill="#333"/></svg><svg class="abs" style="left:1893px;top:1148px" width="6" height="8"><path d="M0.5,0 L5.5,4 L0.5,8 Z" fill="#333"/></svg><div class="abs" style="left:178px;top:1144px;width:871px;height:15px;box-sizing:border-box;border:1px solid #999;border-radius:2px;background:linear-gradient(180deg,#f6f6f6 0,#ececec 45%,#d6d6d6 55%,#cbcbcb 100%);"></div><div class="abs" style="left:609px;top:1148px;width:1px;height:7px;background:#444;box-shadow:3px 0 0 #444,6px 0 0 #444;"></div><div class="abs" style="left:0;top:1160px;width:1920px;height:40px;background:linear-gradient(90deg,#22558e 0,#2a5f99 400px,#2a5e98 900px,#28598f 1300px,#224c7e 1650px,#1e456f 1920px);"></div><div class="abs" style="left:0;top:1160px;width:1920px;height:1px;background:#0e2036;"></div><div class="abs" style="left:0;top:1161px;width:1920px;height:1px;background:rgba(160,200,240,0.55);"></div><div class="abs" style="left:0;top:1162px;width:1920px;height:18px;background:linear-gradient(180deg,rgba(255,255,255,0.05),rgba(255,255,255,0.0));"></div><svg class="abs" style="left:6px;top:1160px" width="42" height="40" viewBox="6 1160 42 40"><defs><radialGradient id="orb" cx="0.5" cy="0.3" r="0.75"><stop offset="0" stop-color="#9cc4ea"/><stop offset="0.45" stop-color="#2a64a8"/><stop offset="0.8" stop-color="#143e72"/><stop offset="1" stop-color="#2aa8e8"/></radialGradient><linearGradient id="orbg" x1="0" y1="0" x2="0" y2="1"><stop offset="0" stop-color="#fff" stop-opacity="0.55"/><stop offset="1" stop-color="#fff" stop-opacity="0.05"/></linearGradient></defs><circle cx="26.5" cy="1179.5" r="18.6" fill="url(#orb)" stroke="#6a8cb8" stroke-width="1"/><path d="M15.5,1171.5 C19,1169 22,1169.5 25.5,1171 L24.5,1180 C21,1178.5 18,1178.5 14.5,1180.5 Z" fill="#f05a28"/><path d="M26.5,1171.5 C30,1173 33.5,1173 38,1170.5 L37,1180 C33,1182 30,1182 25.5,1180.5 Z" fill="#82c040"/><path d="M14.3,1181.5 C18,1179.5 21,1179.5 24.3,1181 L23.3,1190 C20,1188.5 17,1188.5 13.3,1190.5 Z" fill="#2a9ee8"/><path d="M25.3,1181.5 C29,1183 32.5,1183 36.8,1181 L35.8,1190 C32,1192 29,1192 24.3,1190.5 Z" fill="#fbbc20"/><ellipse cx="26.5" cy="1172" rx="14" ry="9" fill="url(#orbg)"/></svg><div class="abs" style="left:60px;top:1161px;width:58px;height:38px;box-sizing:border-box;border:1px solid rgba(10,25,50,0.7);border-radius:3px;box-shadow:inset 0 0 0 1px rgba(255,255,255,0.35);background:linear-gradient(165deg,rgba(255,255,255,0.42) 0%,rgba(255,255,255,0.14) 45%,rgba(255,255,255,0.08) 100%);"></div><div class="abs" style="left:184px;top:1161px;width:50px;height:38px;box-sizing:border-box;border:1px solid rgba(10,25,50,0.7);border-radius:3px;box-shadow:inset 0 0 0 1px rgba(255,255,255,0.35);background:linear-gradient(165deg,rgba(255,255,255,0.42) 0%,rgba(255,255,255,0.14) 45%,rgba(255,255,255,0.08) 100%);"></div><div class="abs" style="left:245px;top:1161px;width:59px;height:38px;box-sizing:border-box;border:1px solid rgba(10,25,50,0.7);border-radius:3px;box-shadow:inset 0 0 0 1px rgba(255,255,255,0.35);background:linear-gradient(165deg,rgba(255,255,255,0.42) 0%,rgba(255,255,255,0.14) 45%,rgba(255,255,255,0.08) 100%);"></div><div class="abs" style="left:308px;top:1161px;width:50px;height:38px;box-sizing:border-box;border:1px solid rgba(10,25,50,0.7);border-radius:3px;box-shadow:inset 0 0 0 1px rgba(255,255,255,0.35);background:linear-gradient(165deg,rgba(255,255,255,0.42) 0%,rgba(255,255,255,0.14) 45%,rgba(255,255,255,0.08) 100%);"></div><div class="abs" style="left:369px;top:1161px;width:54px;height:38px;box-sizing:border-box;border:1px solid rgba(10,25,50,0.7);border-radius:3px;box-shadow:inset 0 0 0 1px rgba(255,255,255,0.35);background:linear-gradient(165deg,rgba(255,255,255,0.62) 0%,rgba(255,255,255,0.32) 45%,rgba(255,255,255,0.22) 100%);"></div><div class="abs" style="left:236px;top:1163px;width:2px;height:36px;border-left:1px solid rgba(255,255,255,0.35);border-right:1px solid rgba(0,0,0,0.4);"></div><div class="abs" style="left:360px;top:1163px;width:2px;height:36px;border-left:1px solid rgba(255,255,255,0.35);border-right:1px solid rgba(0,0,0,0.4);"></div><div class="abs" style="left:425px;top:1163px;width:2px;height:36px;border-left:1px solid rgba(255,255,255,0.35);border-right:1px solid rgba(0,0,0,0.4);"></div><svg class="abs" style="left:72px;top:1165px" width="34" height="32" viewBox="0 0 34 32"><rect x="2" y="6" width="28" height="20" rx="2" fill="#e8c870" stroke="#a08030" stroke-width="0.8"/><rect x="4" y="3" width="6" height="4" fill="#50b050"/><rect x="13" y="4" width="6" height="4" fill="#d04040"/><rect x="21" y="5" width="6" height="4" fill="#3a90d0"/><rect x="2" y="10" width="30" height="17" rx="2" fill="#f4dc90" stroke="#a08030" stroke-width="0.8"/><path d="M8,30 V21 H24 V30 M12,30 V24 H20 V30" fill="#a8d8f0" stroke="#3080b0" stroke-width="1.2"/></svg><svg class="abs" style="left:136px;top:1169px" width="28" height="27" viewBox="0 0 28 27"><rect x="2" y="2" width="22" height="22" fill="#5aa0d8" stroke="#2a6aa0" stroke-width="0.8"/><rect x="5" y="0" width="22" height="22" fill="#9ac8ec" opacity="0.6"/><circle cx="13" cy="13" r="8" fill="#f07820" stroke="#fff" stroke-width="1"/><path d="M10.5,8.5 L17.5,13 L10.5,17.5 Z" fill="#fff"/></svg><svg class="abs" style="left:190px;top:1162px" width="38" height="36" viewBox="190 1162 38 36"><defs><radialGradient id="ffx" cx="0.75" cy="0.2" r="0.95"><stop offset="0" stop-color="#fff44f"/><stop offset="0.35" stop-color="#ffb52a"/><stop offset="0.65" stop-color="#ff5a24"/><stop offset="1" stop-color="#e42244"/></radialGradient><radialGradient id="ffg" cx="0.4" cy="0.35" r="0.7"><stop offset="0" stop-color="#6a5af0"/><stop offset="1" stop-color="#2a2a9a"/></radialGradient></defs><path d="M214.5,1165.5 C221,1169 224.5,1175 224,1182 C223.5,1190 216.5,1195.5 208.5,1195.5 C200,1195.5 193,1189 193,1180.5 C193,1176 194.5,1172 197,1169 C197,1172 198,1174 199.5,1175 C201,1170 205,1167.5 209,1167 C208,1168.5 208,1170 209,1171 C212,1169.5 214.5,1168 214.5,1165.5 Z" fill="url(#ffx)"/><circle cx="208.5" cy="1180.5" r="7" fill="url(#ffg)"/><path d="M196,1181 C197,1188 204,1192 211,1190 C206,1191 201.5,1187.5 202.5,1183 C204,1185.5 208,1186.5 211.5,1185 C208,1184.5 205.5,1182 206,1179 C203,1178.5 199,1179 196,1181 Z" fill="#ff7a20"/></svg><svg class="abs" style="left:256px;top:1163px" width="38" height="33" viewBox="256 1163 38 33"><path d="M259,1176 L266,1173 L266,1189 L259,1187 Z" fill="#d0d0d0" stroke="#888" stroke-width="0.6"/><rect x="260" y="1176" width="1.5" height="3" fill="#60e060"/><path d="M266,1166 L290,1167.5 L289,1185 L266,1184 Z" fill="#e0e0e0" stroke="#999" stroke-width="0.8"/><path d="M268,1168 L288,1169.3 L287.3,1183 L268,1182.2 Z" fill="#142414"/><path d="M268,1176 L272,1176 L274,1170 L276,1180 L278,1172 L280,1179 L282,1171 L284,1178 L287.5,1177" stroke="#30e040" fill="none" stroke-width="1"/><ellipse cx="278" cy="1190.5" rx="7.5" ry="2.8" fill="#d8d8d8" stroke="#999" stroke-width="0.6"/><rect x="276" y="1185" width="4" height="4" fill="#ccc"/></svg><svg class="abs" style="left:316px;top:1163px" width="36" height="34" viewBox="316 1163 36 34"><defs><radialGradient id="smk" cx="0.4" cy="0.3" r="0.8"><stop offset="0" stop-color="#4060e0"/><stop offset="0.7" stop-color="#1020b0"/><stop offset="1" stop-color="#0a1470"/></radialGradient></defs><circle cx="333.4" cy="1180.4" r="13" fill="url(#smk)"/><path d="M320.5,1180 C326,1177 332,1183 346,1179 L346,1183 C332,1187 326,1181 320.5,1183 Z" fill="#8aa8f0" opacity="0.6"/><path d="M319.5,1193.5 C324,1190 329,1185 331,1178 C333,1171 337,1167 340,1168.5 C343,1170 341,1178 336,1183 C331,1188 325,1191 319.5,1193.5 Z" fill="#d8ecfa" stroke="#6a9ad8" stroke-width="0.8"/></svg><svg class="abs" style="left:380px;top:1163px" width="32" height="30" viewBox="380 1163 32 30"><defs><linearGradient id="adb" x1="0" y1="0" x2="0" y2="1"><stop offset="0" stop-color="#f01818"/><stop offset="1" stop-color="#a80606"/></linearGradient></defs><rect x="381.8" y="1164.8" width="28.2" height="26.2" fill="url(#adb)" stroke="#700" stroke-width="0.6"/><path d="M388,1186 C386,1188 385,1185 388,1183 C392,1180 395,1173 395.5,1170 C396,1167 393.5,1168 394,1171 C394.5,1175 398,1180 404,1182 C407,1183 407,1180 403,1180 C398,1180 392,1182 388,1186 Z" fill="none" stroke="#fff" stroke-width="1.2"/></svg><svg class="abs" style="left:1700px;top:1160px" width="140" height="40" viewBox="1700 1160 140 40"><circle cx="1719.3" cy="1180" r="10.3" fill="#fff"/><circle cx="1719.3" cy="1180" r="8.6" fill="#1e98dc"/><path d="M1715.6,1176.8 C1715.6,1171.5 1723.4,1171.5 1723.4,1176.3 C1723.4,1179 1720.3,1179.3 1720.3,1182.2" fill="none" stroke="#fff" stroke-width="2.6"/><circle cx="1720.2" cy="1185.6" r="1.5" fill="#fff"/><circle cx="1727.4" cy="1184.6" r="4.6" fill="#e81010"/><rect x="1726.7" y="1181" width="1.5" height="4.3" fill="#fff"/><rect x="1726.7" y="1186.2" width="1.5" height="1.5" fill="#fff"/><path d="M1742.8,1182.3 L1746.2,1178.2 L1749.6,1182.3 Z" fill="#e8eef6"/><path d="M1764,1177.5 H1767 L1771,1173.5 V1188 L1767,1184 H1764 Z" fill="#f0f0f0" stroke="#222" stroke-width="0.5"/><path d="M1773,1178.5 C1774.3,1180 1774.3,1182 1773,1183.5 M1775,1176.5 C1777.5,1179 1777.5,1183 1775,1185.5 M1777,1174.8 C1780.5,1178 1780.5,1184 1777,1187.2" stroke="#f0f0f0" fill="none" stroke-width="1"/><path d="M1788.2,1173.8 V1188.2" stroke="#f4f4f4" stroke-width="1.3"/><path d="M1789,1175 H1796 L1799.5,1177 L1801.5,1176.5 V1181 L1796,1182 L1789,1181 Z" fill="#f4f4f4"/><circle cx="1798" cy="1184.5" r="4.3" fill="#e02020" stroke="#fff" stroke-width="0.6"/><path d="M1796.2,1182.7 L1799.8,1186.3 M1799.8,1182.7 L1796.2,1186.3" stroke="#fff" stroke-width="1.3"/><path d="M1814.2,1179 V1188.4 M1812.7,1174 V1178 H1815.8 V1174 M1814.2,1174 V1178" stroke="#f4f4f4" stroke-width="1" fill="none"/><rect x="1816.5" y="1175.8" width="9.3" height="9.5" fill="#1a3a64" stroke="#f4f4f4" stroke-width="1"/><path d="M1817,1187.8 H1825.5 M1821.2,1185.5 V1187.8" stroke="#f4f4f4" stroke-width="1.2"/></svg><div class="abs" style="left:1841px;top:1165px;width:58px;font-size:12px;line-height:16px;color:#fff;text-align:center;">7:00 AM<br>2/26/2019</div><div class="abs" style="left:1906px;top:1161px;width:14px;height:39px;box-sizing:border-box;border:1px solid rgba(170,200,235,0.55);background:linear-gradient(180deg,rgba(255,255,255,0.18),rgba(0,0,0,0.08) 40%,rgba(60,120,200,0.2));"></div>
</body></html>
